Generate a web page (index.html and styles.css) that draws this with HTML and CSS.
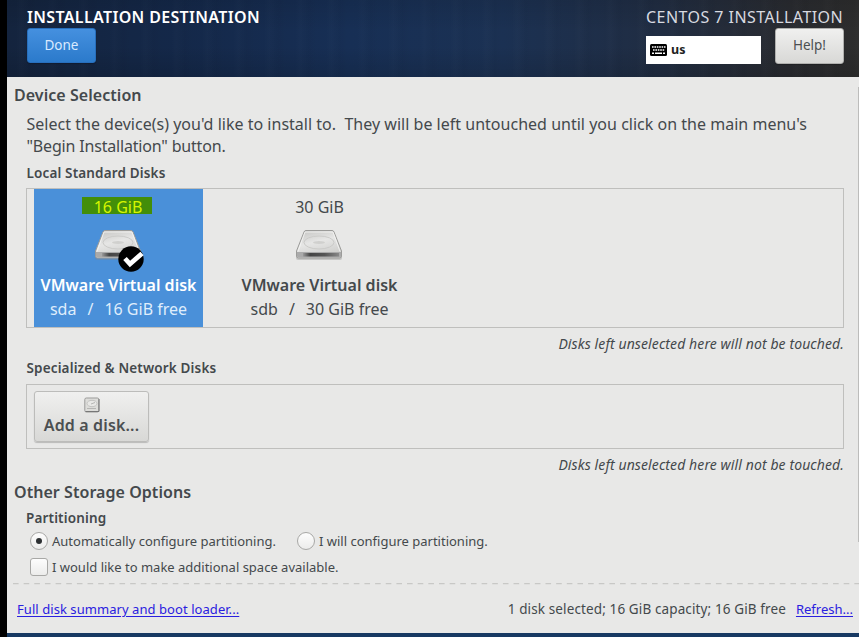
FILE: index.html
```html
<!DOCTYPE html>
<html lang="en">
<head>
<meta charset="utf-8">
<title>Installation Destination</title>
<link rel="stylesheet" href="styles.css">
</head>
<body>
<svg class="defs" width="0" height="0" aria-hidden="true">
  <defs>
    <linearGradient id="top" x1="0" y1="0" x2="0.4" y2="1"><stop offset="0" stop-color="#c2c2c0"/><stop offset=".5" stop-color="#e6e6e5"/><stop offset="1" stop-color="#cfcfcd"/></linearGradient>
    <linearGradient id="front" x1="0" y1="0" x2="1" y2="0"><stop offset="0" stop-color="#999"/><stop offset=".2" stop-color="#444"/><stop offset=".6" stop-color="#555"/><stop offset="1" stop-color="#888"/></linearGradient>
    <symbol id="drive" viewBox="0 0 48 32">
      <path d="M1 24 L1 29 Q1 31 3 31 H45 Q47 31 47 29 V24 Z" fill="#888" opacity=".35"/>
      <path d="M9 3 Q9.500 1.500 11 1.500 H37 Q38.500 1.500 39 3 L46.500 22 V27 Q46.500 29 44.500 29 H3.500 Q1.500 29 1.500 27 V22 Z" fill="url(#top)" stroke="#9b9b99"/>
      <path d="M2 23 H46 V27 Q46 28.500 44.500 28.500 H3.500 Q2 28.500 2 27 Z" fill="#aaa"/>
      <path d="M8 24 H44 V27.500 H8 Z" fill="url(#front)"/>
      <ellipse cx="24" cy="13.500" rx="15" ry="6.500" fill="none" stroke="#cbcbc9"/>
      <ellipse cx="24" cy="13.500" rx="6" ry="1.500" fill="#d0d0ce"/>
      <path d="M3 22.500 L10 3 H38 L45 22.500" fill="none" stroke="#f6f6f5" opacity=".8"/>
    </symbol>
  </defs>
</svg>
<div class="screen">
  <header class="header">
    <div class="head-left">
      <h1 class="title">INSTALLATION DESTINATION</h1>
      <button class="btn done">Done</button>
    </div>
    <div class="head-right">
      <div class="product">CENTOS 7 INSTALLATION</div>
      <div class="head-tools">
        <div class="keyboard">
          <svg width="18" height="12" viewBox="0 0 18 12"><rect width="17" height="12" rx="1.500" fill="#000"/><path d="M2 3 H15.500 M3 6 H15" stroke="#fff" stroke-width="1.600" stroke-dasharray="1.600 .8"/><path d="M2 9.300 H4 M5 9.300 H12 M13 9.300 H15" stroke="#fff" stroke-width="1.500"/></svg>
          <span>us</span>
        </div>
        <button class="btn help">Help!</button>
      </div>
    </div>
  </header>
  <main class="main">
    <h2 class="section">Device Selection</h2>
    <p class="intro">Select the device(s) you'd like to install to.&nbsp; They will be left untouched until you click on the main menu's<br><span class="last-line">"Begin Installation" button.</span></p>
    <h3 class="sub local">Local Standard Disks</h3>
    <div class="box disks">
      <div class="disk selected">
        <div class="size"><mark>16 GiB</mark></div>
        <div class="drive"><svg width="48" height="32"><use href="#drive"/></svg>
          <svg class="check" width="26" height="26" viewBox="0 0 26 26"><circle cx="13" cy="13" r="12.700" fill="#000"/><path d="M7 12.500 L12 18 L24 7.500" fill="none" stroke="#fff" stroke-width="4.800"/></svg>
        </div>
        <div class="name">VMware Virtual disk</div>
        <div class="info"><span>sda</span><span>/</span><span>16 GiB free</span></div>
      </div>
      <div class="disk">
        <div class="size">30 GiB</div>
        <div class="drive"><svg width="48" height="32"><use href="#drive"/></svg></div>
        <div class="name">VMware Virtual disk</div>
        <div class="info"><span>sdb</span><span>/</span><span>30 GiB free</span></div>
      </div>
    </div>
    <p class="note">Disks left unselected here will not be touched.</p>
    <h3 class="sub special">Specialized &amp; Network Disks</h3>
    <div class="box network">
      <button class="btn add">
        <svg width="16" height="16" viewBox="0 0 16 16"><rect x=".8" y="1" width="14" height="14" rx="1.500" fill="#ddddda" stroke="#9b9b99"/><path d="M1.500 14.500 H15 V2" fill="none" stroke="#777"/><ellipse cx="8" cy="6.500" rx="5" ry="3.200" fill="#e8e8e6" stroke="#c2c2c0"/><path d="M3 11.500 H12 M7 7 L11 5.500" stroke="#b5b5b3"/></svg>
        <span>Add a disk...</span>
      </button>
    </div>
    <p class="note">Disks left unselected here will not be touched.</p>
    <h2 class="section other">Other Storage Options</h2>
    <h3 class="sub part">Partitioning</h3>
    <div class="options">
      <label><i class="radio on"></i><span>Automatically configure partitioning.</span></label>
      <label><i class="radio"></i><span>I will configure partitioning.</span></label>
    </div>
    <div class="options space">
      <label><i class="checkbox"></i><span>I would like to make additional space available.</span></label>
    </div>
    <i class="scroll"></i>
  </main>
  <svg class="dash" height="2" width="852"><path d="M6 .5 H852" stroke="#c8c8c6" stroke-width="1.500" stroke-dasharray="5.600 5.050"/></svg>
  <footer class="footer">
    <a class="summary">Full disk summary and boot loader...</a>
    <div class="status"><span class="capacity">1 disk selected; 16 GiB capacity; 16 GiB free</span><a class="refresh">Refresh...</a></div>
  </footer>
</div>
</body>
</html>
```
FILE: styles.css
```css
* { box-sizing: border-box; }
body { margin: 0; height: 637px; overflow: hidden; background: #000; font-family: "Noto Sans", "Open Sans", sans-serif; color: #44494c; white-space: nowrap; }
h1, h2, h3, p { margin: 0; }
.defs { position: absolute; }
.screen { margin-left: 7px; height: 637px; display: flex; flex-direction: column; background: #e8e8e7; border-bottom: 4px solid #173962; }
.header { height: 77px; flex: none; padding: 5px 15px 0 20px; display: flex; justify-content: space-between; color: #fff;
  background: linear-gradient(180deg, #00000018, #00000000 40%, #00000000 60%, #00000020), repeating-linear-gradient(90deg, #ffffff00 0 9px, #ffffff03 14px, #00000006 23px, #ffffff00 31px), linear-gradient(90deg, #14243e 0, #142849 20%, #172f55 40%, #1b3153 58%, #202d43 76%, #292b30 92%, #2d2d2d 100%); }
.title, .product { height: 23px; line-height: 24px; }
.title { font-size: 16px; font-weight: 600; letter-spacing: .34px; }
.product { font-size: 16px; letter-spacing: .45px; color: #d8dae0; }
.btn { font-family: inherit; border: 1px solid #b0b0ae; border-radius: 3px; padding: 0; color: #4b4f51; background: linear-gradient(#f0f0ef, #d8d8d6); box-shadow: 0 1px 1px #0003; }
.done { display: block; width: 69px; height: 35px; padding-bottom: 1px; font-size: 13.5px; color: #d9eaff; border-color: #286fbd; background: linear-gradient(#4590df, #2b7acb); }
.head-tools { display: flex; justify-content: space-between; }
.head-right { width: 198px; }
.keyboard { width: 115px; height: 28px; margin-top: 8px; padding-left: 4px; background: #fff; color: #222; display: flex; align-items: center; gap: 3px; font-size: 12.5px; font-weight: 700; }
.keyboard span { margin-top: -1px; }
.help { width: 69px; height: 36px; padding-bottom: 2px; font-size: 13.5px; }
.main { position: relative; height: 506px; flex: none; padding: 7px 15px 0 7px; }
.section { height: 22px; line-height: 22px; font-size: 16px; font-weight: 600; letter-spacing: .05px; }
.intro { margin: 7px 0 0 12.5px; height: 44px; font-size: 16px; line-height: 22px; letter-spacing: .015px; }
.last-line { letter-spacing: -.18px; }
.sub { margin-left: 12.5px; height: 20px; line-height: 20px; font-size: 13.5px; letter-spacing: .15px; font-weight: 600; }
.local { margin-top: 6px; }
.box { margin-left: 12px; width: 818px; border: 1px solid #bfbfbd; display: flex; }
.disks { height: 140px; margin-top: 5px; padding-left: 7px; gap: 32px; }
.disk { width: 169px; height: 138px; text-align: center; display: flex; flex-direction: column; align-items: center; font-size: 16px; }
.selected { background: #4a90d9; color: #dfedfc; }
.size { height: 22px; line-height: 20px; margin-top: 8px; }
mark { display: block; width: 70px; height: 17px; line-height: 20px; background: #438e09; color: #d6f500; padding-left: 2px; margin-right: 3px; }
.drive { position: relative; width: 48px; height: 32px; margin-top: 10px; left: -1px; }
.check { position: absolute; left: 24px; top: 17px; }
.name { margin-top: 13px; height: 22px; line-height: 22px; font-weight: 600; }
.selected .name { color: #fff; }
.info { display: flex; gap: 11px; height: 24px; line-height: 27px; }
.note { height: 20px; line-height: 22px; margin-top: 5px; text-align: right; font-size: 14px; letter-spacing: .1px; font-style: italic; }
.special { margin-top: 5px; }
.network { height: 65px; margin-top: 6px; padding: 6px 7px; }
.add { width: 115px; height: 51px; display: flex; flex-direction: column; align-items: center; padding-top: 5px; font-size: 16px; letter-spacing: .15px; line-height: 24px; font-weight: 600; border-color: #bcbcba; }
.add svg { flex: none; }
.other { margin-top: 7px; }
.part { margin: 5px 0 0 12px; }
.options { display: flex; gap: 21px; height: 20px; margin: 3px 0 0 16px; }
.space { margin-top: 6px; }
.options label { display: flex; align-items: center; gap: 4px; font-size: 13px; }
.radio, .checkbox { width: 18px; height: 18px; border: 1.500px solid #a8a8a6; background: linear-gradient(#fdfdfd, #ececeb); }
.radio { border-radius: 50%; display: grid; place-items: center; }
.on::after { content: ""; width: 6px; height: 6px; border-radius: 50%; background: #2d3032; }
.checkbox { border-radius: 3px; }
.scroll { position: absolute; right: 0; top: 10px; width: 1px; height: 455px; background: #bcbcbb; }
.dash { display: block; flex: none; }
.footer { flex: 1; display: flex; justify-content: space-between; padding: 14px 6px 0 10px; font-size: 13px; line-height: 20px; }
.footer a { color: #2a20df; text-decoration: underline; text-underline-offset: 2px; }
.summary { letter-spacing: .06px; }
.capacity { font-size: 13.5px; letter-spacing: .12px; }
.status { display: flex; gap: 10px; }
```
